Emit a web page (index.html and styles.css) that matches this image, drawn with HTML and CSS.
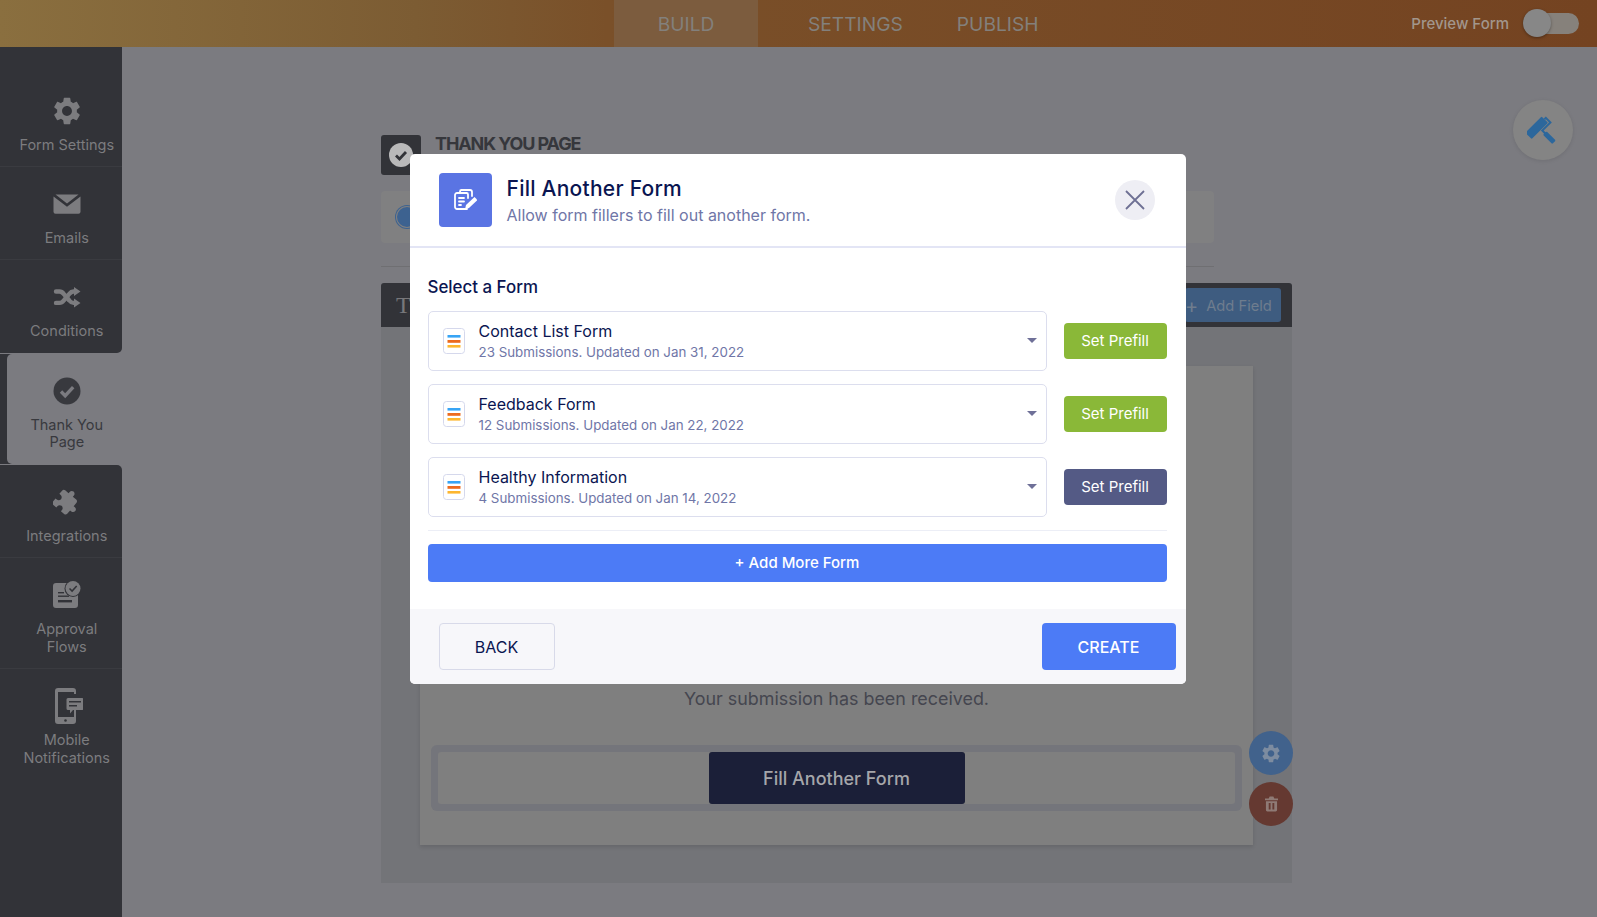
FILE: index.html
```html
<!DOCTYPE html>
<html lang="en">

<head>
    <meta charset="UTF-8">
    <title>Fill Another Form</title>
    <link rel="stylesheet" href="styles.css">
</head>

<body>
    <svg class="defs" width="0" height="0">
        <symbol id="gear" viewBox="2.2 1.8 19.6 20.4">
            <path d="M19.14 12.94c.04-.3.06-.61.06-.94 0-.32-.02-.64-.07-.94l2.03-1.58c.18-.14.23-.41.12-.61l-1.92-3.32c-.12-.22-.37-.29-.59-.22l-2.39.96c-.5-.38-1.03-.7-1.62-.94l-.36-2.54c-.04-.24-.24-.41-.48-.41h-3.84c-.24 0-.43.17-.47.41l-.36 2.54c-.59.24-1.13.57-1.62.94l-2.39-.96c-.22-.08-.47 0-.59.22L2.74 8.87c-.12.21-.08.47.12.61l2.03 1.58c-.05.3-.09.63-.09.94s.02.64.07.94l-2.03 1.58c-.18.14-.23.41-.12.61l1.92 3.32c.12.22.37.29.59.22l2.39-.96c.5.38 1.03.7 1.62.94l.36 2.54c.05.24.24.41.48.41h3.84c.24 0 .44-.17.47-.41l.36-2.54c.59-.24 1.13-.56 1.62-.94l2.39.96c.22.08.47 0 .59-.22l1.92-3.32c.12-.22.07-.47-.12-.61l-2.01-1.58zM12 15.6c-1.98 0-3.6-1.62-3.6-3.6s1.62-3.6 3.6-3.6 3.6 1.62 3.6 3.6-1.62 3.6-3.6 3.6z" fill="currentColor"/>
        </symbol>
        <symbol id="form-lines" viewBox="0 0 22 26">
            <rect x="0.5" y="0.5" width="21" height="25" rx="3" fill="#fff" stroke="#d5d8ec"/>
            <rect x="4.5" y="7" width="13" height="2.6" fill="#37a4f5"/>
            <rect x="4.5" y="12" width="13" height="2.8" fill="#ec6a1e"/>
            <rect x="4.5" y="17" width="13" height="2.6" fill="#fdb62f"/>
        </symbol>
    </svg>

    <header class="topbar">
        <nav class="topnav">
            <a class="topnav-tab active">BUILD</a>
            <a class="topnav-tab settings">SETTINGS</a>
            <a class="topnav-tab publish">PUBLISH</a>
        </nav>
        <div class="preview">
            <span>Preview Form</span>
            <div class="toggle"><div class="knob"></div></div>
        </div>
    </header>

    <div class="workspace">
        <aside class="sidebar">
            <div class="side-item first">
                <svg class="side-icon"><use href="#gear"/></svg>
                <span>Form Settings</span>
            </div>
            <div class="side-item">
                <svg class="side-icon" viewBox="0 0 27 28"><path d="M2 4.5h23L13.5 13.6zM0 6.5l13.5 10.3L27 6.5v15.3a2 2 0 0 1-2 2H2a2 2 0 0 1-2-2z" fill="currentColor"/></svg>
                <span>Emails</span>
            </div>
            <div class="side-item before-active">
                <svg class="side-icon" viewBox="0 0 27 28"><g fill="none" stroke="currentColor" stroke-width="4.4" stroke-linecap="round"><path d="M2.5 8.5H6c2 0 3 .8 4.2 2.400l5.600 6.600c1.200 1.500 2.200 2.400 4.200 2.400h1"/><path d="M2.500 19.900H6c2 0 3-.8 4.200-2.400l5.600-6.600c1.200-1.500 2.200-2.400 4.200-2.400h1"/></g><path d="M20.500 4L27 8.500 20.500 13zM20.500 15.500L27 20l-6.500 4.500z" fill="currentColor"/></svg>
                <span>Conditions</span>
            </div>
            <div class="side-active-wrap">
                <div class="side-item active">
                    <svg class="side-icon" viewBox="0 0 28 28"><circle cx="14" cy="14" r="13.5" fill="currentColor"/><path d="M8 14.500l4.200 4.200 8-8.500" fill="none" stroke="#7b7b80" stroke-width="3.4"/></svg>
                    <span>Thank You Page</span>
                </div>
            </div>
            <div class="side-item after-active">
                <svg class="side-icon" viewBox="0 0 24 24"><path transform="rotate(40 12 12) translate(.6 .6) scale(.95)" d="M20.500 11H19V7c0-1.100-.9-2-2-2h-4V3.500C13 2.120 11.880 1 10.500 1S8 2.120 8 3.500V5H4c-1.100 0-1.990.9-1.990 2v3.800H3.500c1.490 0 2.700 1.210 2.700 2.700s-1.210 2.700-2.700 2.700H2V20c0 1.100.9 2 2 2h3.800v-1.500c0-1.490 1.210-2.700 2.700-2.700 1.490 0 2.700 1.210 2.700 2.700V22H17c1.100 0 2-.9 2-2v-4h1.500c1.380 0 2.500-1.120 2.500-2.500S21.880 11 20.500 11z" fill="currentColor"/></svg>
                <span>Integrations</span>
            </div>
            <div class="side-item">
                <svg class="side-icon" viewBox="0 0 28 28"><path d="M3 2h14a8 8 0 0 0 8 9.500V24a3 3 0 0 1-3 3H3a3 3 0 0 1-3-3V5a3 3 0 0 1 3-3z" fill="currentColor"/><g fill="#323338"><rect x="5" y="11" width="6" height="1.4"/><rect x="5" y="14.5" width="11" height="1.4"/><rect x="5" y="19" width="14" height="2.4"/></g><circle cx="20" cy="7.500" r="8.500" fill="#323338"/><circle cx="20" cy="7.500" r="7.500" fill="currentColor"/><path d="M16.500 7.500l2.600 2.600 4.600-5" fill="none" stroke="#323338" stroke-width="1.5"/></svg>
                <span>Approval Flows</span>
            </div>
            <div class="side-item last">
                <svg class="side-icon mobile" viewBox="0 0 28 36"><path d="M3 0h15a3 3 0 0 1 3 3v3h-2V4H3v25h16v-7h2v11a3 3 0 0 1-3 3H3a3 3 0 0 1-3-3V3a3 3 0 0 1 3-3z" fill="currentColor"/><circle cx="10.500" cy="32.500" r="1.300" fill="#323338"/><path d="M13 10h14a1.500 1.500 0 0 1 1.500 1.500v9A1.500 1.500 0 0 1 27 22h-9l-3 3.500V22h-2a1.500 1.500 0 0 1-1.500-1.500v-9A1.500 1.500 0 0 1 13 10z" fill="currentColor"/><g fill="#323338"><rect x="14" y="13" width="12" height="1.5"/><rect x="14" y="17" width="8" height="1.5"/></g></svg>
                <span>Mobile Notifications</span>
            </div>
            <div class="side-rest"></div>
        </aside>

        <main class="main">
            <div class="panel">
                <div class="page-head">
                    <div class="page-head-icon">
                        <svg viewBox="0 0 24 24" width="24" height="24"><circle cx="12" cy="12" r="12" fill="#b9b9ba"/><path d="M7 12.500l3.500 3.500 6.500-7" fill="none" stroke="#323338" stroke-width="2.8"/></svg>
                    </div>
                    <div class="page-head-title">THANK YOU PAGE</div>
                </div>
                <div class="radio-box"><div class="radio"></div></div>
                <div class="panel-rule"></div>
                <div class="editor">
                    <div class="editor-bar">
                        <span class="editor-t">T</span>
                        <div class="add-field"><span class="add-plus">+</span><span>Add Field</span></div>
                    </div>
                    <div class="editor-body">
                        <div class="sheet">
                            <p class="received">Your submission has been received.</p>
                            <div class="widget">
                                <div class="widget-inner">
                                    <div class="fill-button">Fill Another Form</div>
                                </div>
                            </div>
                        </div>
                        <div class="widget-tools">
                            <div class="tool tool-gear"><svg width="18" height="19"><use href="#gear"/></svg></div>
                            <div class="tool tool-trash">
                                <svg viewBox="0 0 14 16" width="13" height="16"><path d="M5 0h4l1 2h4v2H0V2h4zM1 5h12v9.500a1.500 1.500 0 0 1-1.500 1.500h-9A1.500 1.500 0 0 1 1 14.500zm3 2v7h2V7zm4 0v7h2V7z" fill="currentColor" fill-rule="evenodd"/></svg>
                            </div>
                        </div>
                    </div>
                </div>
            </div>
            <div class="roller">
                <svg viewBox="0 0 32 32" width="32" height="32">
                    <g transform="rotate(-45 16 16)" fill="#2c679c">
                        <rect x="3" y="4" width="23" height="9" rx="1"/>
                        <path d="M26 7h3v8.500H17.500V19h-2v-5.500H27V9h-1z"/>
                        <rect x="14" y="18" width="5" height="13" rx="1"/>
                    </g>
                </svg>
            </div>
        </main>
    </div>

    <div class="overlay">
        <section class="modal">
            <div class="modal-head">
                <div class="modal-icon">
                    <svg viewBox="0 0 24 24" width="24" height="24" fill="none" stroke="#fff" stroke-width="1.8" stroke-linejoin="round" stroke-linecap="round">
                        <path d="M7 5V3.500A1.500 1.500 0 0 1 8.500 2H17a2 2 0 0 1 2 2v4"/>
                        <path d="M14 21H4a2 2 0 0 1-2-2V7a2 2 0 0 1 2-2h9.500A1.500 1.500 0 0 1 15 6.500V10"/>
                        <path d="M6 10h5M6 13.500h5M6 17h2"/>
                        <path d="M12 21.500l1-4.500 8.500-8 3 3-8.500 8z" fill="#fff" stroke="none"/>
                    </svg>
                </div>
                <div class="modal-titles">
                    <h2>Fill Another Form</h2>
                    <p>Allow form fillers to fill out another form.</p>
                </div>
                <button class="modal-close">
                    <svg viewBox="0 0 20 20" width="20" height="20"><path d="M1 1l18 18M19 1L1 19" stroke="#6e7094" stroke-width="1.8" fill="none"/></svg>
                </button>
            </div>

            <div class="modal-body">
                <div class="select-label">Select a Form</div>

                <div class="form-row">
                    <div class="form-select">
                        <svg class="form-lines" width="22" height="26"><use href="#form-lines"/></svg>
                        <div class="form-info">
                            <div class="form-name">Contact List Form</div>
                            <div class="form-meta">23 Submissions. Updated on Jan 31, 2022</div>
                        </div>
                        <div class="caret"></div>
                    </div>
                    <button class="prefill">Set Prefill</button>
                </div>

                <div class="form-row">
                    <div class="form-select">
                        <svg class="form-lines" width="22" height="26"><use href="#form-lines"/></svg>
                        <div class="form-info">
                            <div class="form-name">Feedback Form</div>
                            <div class="form-meta">12 Submissions. Updated on Jan 22, 2022</div>
                        </div>
                        <div class="caret"></div>
                    </div>
                    <button class="prefill">Set Prefill</button>
                </div>

                <div class="form-row">
                    <div class="form-select">
                        <svg class="form-lines" width="22" height="26"><use href="#form-lines"/></svg>
                        <div class="form-info">
                            <div class="form-name">Healthy Information</div>
                            <div class="form-meta">4 Submissions. Updated on Jan 14, 2022</div>
                        </div>
                        <div class="caret"></div>
                    </div>
                    <button class="prefill pending">Set Prefill</button>
                </div>

                <div class="body-rule"></div>
                <button class="add-more">+ Add More Form</button>
            </div>

            <div class="modal-foot">
                <button class="back">BACK</button>
                <button class="create">CREATE</button>
            </div>
        </section>
    </div>
</body>

</html>
```

FILE: styles.css
```css
* {
    box-sizing: border-box;
}

body {
    margin: 0;
    width: 1597px;
    height: 917px;
    overflow: hidden;
    position: relative;
    display: flex;
    flex-direction: column;
    font-family: Inter, "Liberation Sans", sans-serif;
    background-color: #7b7b80;
}

.defs {
    position: absolute;
}

button {
    font-family: inherit;
    border: none;
    padding: 0;
}

/* top bar */
.topbar {
    height: 47px;
    flex: none;
    display: flex;
    align-items: center;
    justify-content: space-between;
    background: linear-gradient(90deg, #8a6f3f 0%, #7c5c33 26%, #7a5029 38%, #744321 100%);
}

.topnav {
    display: flex;
    height: 100%;
    margin-left: 614px;
}

.topnav-tab {
    display: flex;
    align-items: center;
    font-size: 19.2px;
    color: #83807c;
}

.topnav-tab.active {
    width: 144px;
    justify-content: center;
    background-color: #7c5c3e;
}

.topnav-tab.settings {
    margin-left: 50px;
}

.topnav-tab.publish {
    margin-left: 54px;
}

.preview {
    display: flex;
    align-items: center;
    margin-right: 18px;
    font-size: 15px;
    font-weight: 500;
    color: #a2968c;
}

.toggle {
    width: 56px;
    height: 21px;
    margin-left: 14px;
    border-radius: 11px;
    background-color: #86817b;
    position: relative;
}

.knob {
    position: absolute;
    left: 0;
    top: -4px;
    width: 28px;
    height: 28px;
    border-radius: 50%;
    background-color: #878787;
    box-shadow: 0 1px 3px rgba(0, 0, 0, 0.35);
}

.workspace {
    flex: 1;
    display: flex;
    min-height: 0;
}

/* sidebar */
.sidebar {
    width: 121.5px;
    flex: none;
    display: flex;
    flex-direction: column;
    background-color: #7b7b80;
}

.side-item {
    padding: 23px 0 13px 12px;
    display: flex;
    flex-direction: column;
    align-items: center;
    text-align: center;
    background-color: #323338;
    border-bottom: 1px solid #3a3b40;
    color: #7c7c7f;
    font-size: 14.5px;
    line-height: 17.5px;
}

.side-item.first {
    padding-top: 50px;
    padding-bottom: 12px;
}

.side-item.last {
    border-bottom: none;
}

.side-item.before-active {
    border-bottom: none;
    border-bottom-right-radius: 5px;
    margin-bottom: 1px;
}

.side-item.after-active {
    border-top-right-radius: 5px;
    margin-top: 1px;
}

.side-active-wrap {
    background-color: #323338;
}

.side-item.active {
    margin-left: 7px;
    padding-left: 5px;
    border-bottom: none;
    background-color: #7b7b80;
    border-radius: 5px 0 0 5px;
    color: #38393e;
}

.side-item span {
    max-width: 104px;
}

.side-item.active span {
    max-width: 88px;
}

.side-icon {
    width: 28px;
    height: 28px;
    margin-bottom: 11px;
    flex: none;
}

.side-icon.mobile {
    height: 36px;
    margin-top: -4px;
    margin-bottom: 7px;
    margin-left: 5px;
}

.side-rest {
    flex: 1;
    background-color: #323338;
}

/* page behind the modal */
.main {
    flex: 1;
    padding-left: 259.5px;
    position: relative;
}

.panel {
    width: 911px;
    padding-top: 88px;
}

.page-head {
    display: flex;
    height: 40px;
}

.page-head-icon {
    width: 40px;
    height: 40px;
    border-radius: 3px;
    background-color: #323338;
    display: flex;
    align-items: center;
    justify-content: center;
}

.page-head-title {
    margin-left: 14px;
    margin-top: -1px;
    font-size: 18px;
    line-height: 20px;
    font-weight: 700;
    letter-spacing: -1.1px;
    color: #36373c;
}

.radio-box {
    width: 833px;
    height: 52px;
    margin-top: 16px;
    border-radius: 4px;
    background-color: #808081;
    display: flex;
    align-items: center;
    padding-left: 15px;
}

.radio {
    width: 22px;
    height: 22px;
    border-radius: 50%;
    background-color: #3d6290;
    box-shadow: 0 0 0 1px #808081 inset, 0 0 0 1px #3d6290;
}

.panel-rule {
    width: 833px;
    height: 1px;
    margin-top: 23px;
    margin-bottom: 16px;
    background-color: #6f6f72;
}

.editor-bar {
    height: 44px;
    border-radius: 3px 3px 0 0;
    background-color: #323338;
    display: flex;
    align-items: center;
    justify-content: space-between;
    padding: 0 11px 0 15px;
}

.editor-t {
    font-family: "Liberation Serif", serif;
    font-size: 24px;
    color: #77777a;
}

.add-field {
    width: 96px;
    height: 34px;
    padding-top: 1px;
    border-radius: 3px;
    background-color: #3e5c80;
    color: #6f7d8e;
    font-size: 14.7px;
    display: flex;
    align-items: center;
    gap: 8px;
}

.add-plus {
    font-size: 20px;
}

.editor-body {
    height: 556px;
    padding: 39px 39px 38px;
    background-color: #737478;
    position: relative;
}

.sheet {
    height: 100%;
    background-color: #7f7f7f;
    box-shadow: 0 2px 4px rgba(0, 0, 0, 0.12);
    display: flex;
    flex-direction: column;
    justify-content: flex-end;
    align-items: center;
    padding: 0 11px 34px;
}

.received {
    margin: 0 0 35px;
    font-size: 17.9px;
    line-height: 22px;
    color: #45464f;
}

.widget {
    width: 100%;
    height: 66px;
    padding: 7px;
    border-radius: 6px;
    background-color: #74757b;
}

.widget-inner {
    height: 100%;
    border-radius: 3px;
    background-color: #7f7f7f;
    display: flex;
    justify-content: center;
}

.fill-button {
    width: 256px;
    height: 52px;
    border-radius: 3px;
    background-color: #1b1f38;
    color: #a5a6aa;
    font-size: 18px;
    font-weight: 500;
    display: flex;
    align-items: center;
    justify-content: center;
}

.widget-tools {
    position: absolute;
    right: -1px;
    top: 404px;
    display: flex;
    flex-direction: column;
    gap: 7px;
}

.tool {
    width: 44px;
    height: 44px;
    border-radius: 50%;
    display: flex;
    align-items: center;
    justify-content: center;
    color: #7d8ca0;
}

.tool-gear {
    background-color: #41628c;
}

.tool-trash {
    background-color: #653931;
    color: #8f7a75;
}

.roller {
    position: absolute;
    left: 1391.5px;
    top: 53px;
    width: 60px;
    height: 60px;
    padding-top: 3px;
    border-radius: 50%;
    background-color: #848484;
    box-shadow: 0 1px 4px rgba(0, 0, 0, 0.1);
    display: flex;
    align-items: center;
    justify-content: center;
}

/* modal */
.overlay {
    position: absolute;
    inset: 0;
    display: flex;
    justify-content: center;
    align-items: flex-start;
    padding: 154px 2px 0 0;
}

.modal {
    width: 776px;
    height: 530px;
    background-color: #fff;
    border-radius: 5px;
    overflow: hidden;
    display: flex;
    flex-direction: column;
    color: #0a1551;
}

.modal-head {
    height: 94px;
    flex: none;
    display: flex;
    align-items: center;
    padding: 0 31px 0 29px;
    border-bottom: 2px solid #e3e5f5;
}

.modal-icon {
    width: 53px;
    height: 54px;
    border-radius: 4px;
    background-color: #5a74e3;
    display: flex;
    align-items: center;
    justify-content: center;
}

.modal-titles {
    flex: 1;
    margin-left: 15px;
}

.modal-titles h2 {
    margin: 1px 0 0;
    font-size: 21px;
    line-height: 26px;
    font-weight: 500;
    letter-spacing: 0.25px;
}

.modal-titles p {
    margin: 3px 0 0;
    font-size: 16px;
    line-height: 20px;
    color: #6f76a7;
}

.modal-close {
    width: 40px;
    height: 40px;
    border-radius: 50%;
    background-color: #eeeef4;
    display: flex;
    align-items: center;
    justify-content: center;
}

.modal-body {
    flex: 1;
    padding: 29px 19px 0 18px;
}

.select-label {
    font-size: 16.9px;
    line-height: 20px;
    font-weight: 500;
    margin-bottom: 14px;
}

.form-row {
    display: flex;
    align-items: center;
    margin-bottom: 13.5px;
}

.form-select {
    width: 619.5px;
    height: 59.5px;
    border: 1px solid #dcdeee;
    border-radius: 5px;
    display: flex;
    align-items: center;
    padding: 0 9px 0 14px;
}

.form-lines {
    flex: none;
}

.form-info {
    flex: 1;
    margin-left: 14px;
}

.form-name {
    font-size: 16px;
    line-height: 20px;
}

.form-meta {
    font-size: 13.35px;
    line-height: 18px;
    margin-top: 2px;
    color: #6f76a7;
}

.caret {
    width: 0;
    height: 0;
    border-left: 5.5px solid transparent;
    border-right: 5.5px solid transparent;
    border-top: 5px solid #6f7098;
}

.prefill {
    width: 103px;
    height: 36px;
    margin-left: 17px;
    border-radius: 4px;
    background-color: #8ab838;
    color: #fff;
    font-size: 15px;
}

.prefill.pending {
    background-color: #545a85;
}

.body-rule {
    height: 1px;
    background-color: #eceef6;
}

.add-more {
    display: block;
    width: 100%;
    height: 38px;
    margin-top: 12.5px;
    border-radius: 4px;
    background-color: #4c7bf6;
    color: #fff;
    font-size: 15px;
    font-weight: 500;
}

.modal-foot {
    height: 75px;
    flex: none;
    display: flex;
    align-items: center;
    justify-content: space-between;
    padding: 0 10px 0 29px;
    background-color: #f7f7fa;
}

.back {
    width: 116px;
    height: 47px;
    border: 1px solid #d8dae9;
    border-radius: 4px;
    background-color: #f7f7fa;
    color: #0a1551;
    font-size: 16px;
}

.create {
    width: 134px;
    height: 47px;
    border-radius: 4px;
    background-color: #4c7bf6;
    color: #fff;
    font-size: 16px;
    font-weight: 500;
}
```
